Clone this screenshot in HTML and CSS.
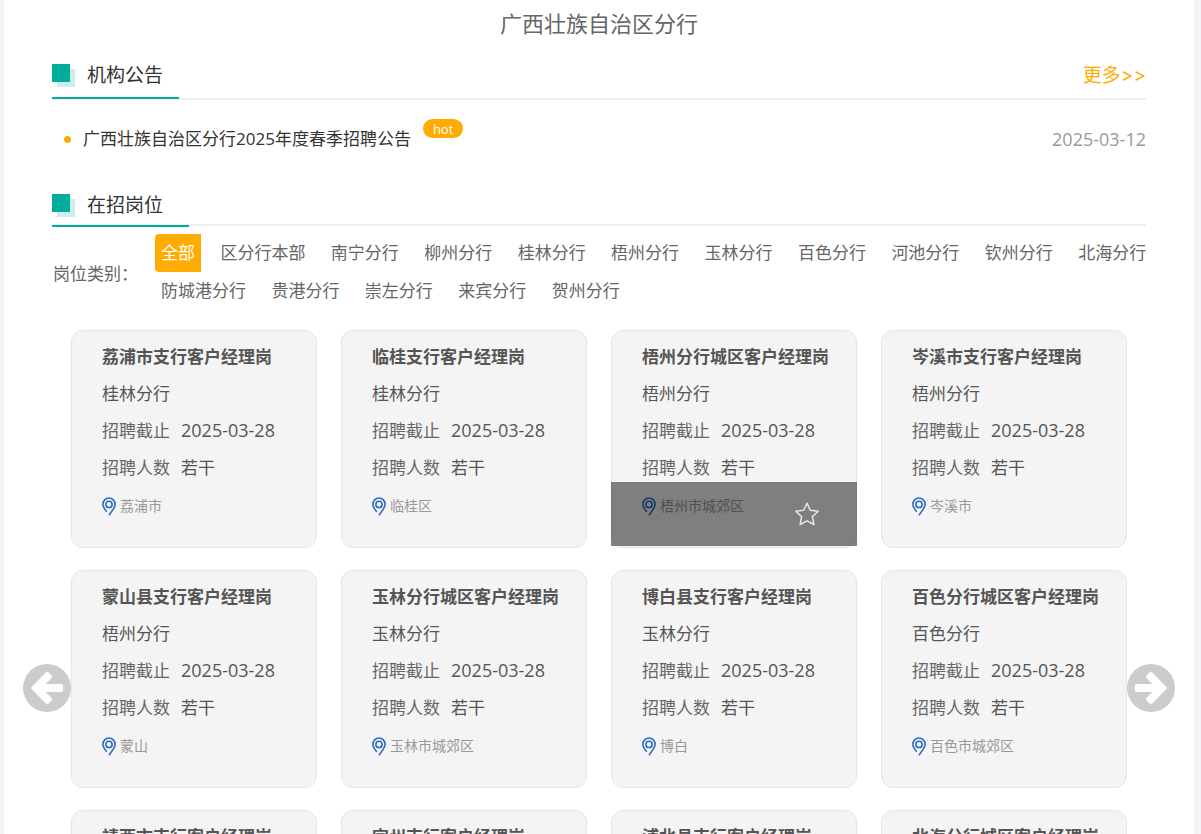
FILE: index.html
```html
<!DOCTYPE html>
<html lang="zh-CN">
<head>
    <meta charset="UTF-8">
    <meta name="viewport" content="width=device-width, initial-scale=1">
    <title>广西壮族自治区分行</title>
    <link rel="stylesheet" href="styles.css">
</head>
<body>
    <svg width="0" height="0" class="icon-defs" aria-hidden="true">
        <symbol id="icon-pin" viewBox="0 0 14 19">
            <path d="M4.4 14.4 2.4 11.6C1.4 10.1.9 8.9.9 7.3a6.1 6.3 0 0 1 12.2 0c0 1.9-.8 3.4-2 5.1L7.3 17.7" fill="none" stroke="currentColor" stroke-width="1.6" stroke-linecap="round"/>
            <circle cx="7" cy="7.4" r="3.1" fill="none" stroke="currentColor" stroke-width="1.6"/>
        </symbol>
        <symbol id="icon-arrow" viewBox="0 0 48 48">
            <circle cx="24" cy="24" r="24" fill="#ccc"/>
            <path d="M7.7 24 22 9.2q2-2.2 4.1-.2l1.8 1.8q1.9 2-.1 4.1L22.6 20H38.5q1.7 0 1.7 1.7v4.6q0 1.7-1.7 1.7H22.6l5.2 5.1q2 2.1.1 4.1l-1.8 1.8q-2.1 2-4.1-.2z" fill="#fff"/>
        </symbol>
    </svg>

    <main class="panel">
        <h1 class="page-title">广西壮族自治区分行</h1>

        <section class="block">
            <div class="block-header">
                <h2 class="block-title">机构公告</h2>
                <a href="#" class="more">更多&gt;&gt;</a>
            </div>
            <ul class="notice-list">
                <li>
                    <a href="#">广西壮族自治区分行2025年度春季招聘公告</a>
                    <span class="hot">hot</span>
                    <time>2025-03-12</time>
                </li>
            </ul>
        </section>

        <section>
            <div class="block">
                <div class="block-header jobs-header">
                    <h2 class="block-title">在招岗位</h2>
                </div>
            </div>
            <div class="filter">
                <span class="filter-label">岗位类别：</span>
                <div class="filter-items">
                    <a href="#" class="active">全部</a>
                    <a href="#">区分行本部</a>
                    <a href="#">南宁分行</a>
                    <a href="#">柳州分行</a>
                    <a href="#">桂林分行</a>
                    <a href="#">梧州分行</a>
                    <a href="#">玉林分行</a>
                    <a href="#">百色分行</a>
                    <a href="#">河池分行</a>
                    <a href="#">钦州分行</a>
                    <a href="#">北海分行</a>
                    <a href="#">防城港分行</a>
                    <a href="#">贵港分行</a>
                    <a href="#">崇左分行</a>
                    <a href="#">来宾分行</a>
                    <a href="#">贺州分行</a>
                </div>
            </div>

            <div class="carousel">
                <button type="button" class="arrow" aria-label="上一页"><svg><use href="#icon-arrow"/></svg></button>
                <div class="job-grid">
                    <article class="job">
                        <h3>荔浦市支行客户经理岗</h3>
                        <p>桂林分行</p>
                        <p><span>招聘截止</span><time>2025-03-28</time></p>
                        <p><span>招聘人数</span>若干</p>
                        <p class="place"><svg><use href="#icon-pin"/></svg>荔浦市</p>
                    </article>
                    <article class="job">
                        <h3>临桂支行客户经理岗</h3>
                        <p>桂林分行</p>
                        <p><span>招聘截止</span><time>2025-03-28</time></p>
                        <p><span>招聘人数</span>若干</p>
                        <p class="place"><svg><use href="#icon-pin"/></svg>临桂区</p>
                    </article>
                    <article class="job">
                        <h3>梧州分行城区客户经理岗</h3>
                        <p>梧州分行</p>
                        <p><span>招聘截止</span><time>2025-03-28</time></p>
                        <p><span>招聘人数</span>若干</p>
                        <p class="place"><svg><use href="#icon-pin"/></svg>梧州市城郊区</p>
                        <div class="job-mask">
                            <button type="button" class="star" aria-label="收藏">
                                <svg viewBox="0 0 24 24"><path d="M12 1.2 15.3 8.3 23.2 9.3 17.4 14.6 18.9 22.5 12 18.8 5.1 22.5 6.6 14.6.8 9.3 8.7 8.3z" fill="none" stroke="#e6e6e6" stroke-width="1.5" stroke-linejoin="round"/></svg>
                            </button>
                        </div>
                    </article>
                    <article class="job">
                        <h3>岑溪市支行客户经理岗</h3>
                        <p>梧州分行</p>
                        <p><span>招聘截止</span><time>2025-03-28</time></p>
                        <p><span>招聘人数</span>若干</p>
                        <p class="place"><svg><use href="#icon-pin"/></svg>岑溪市</p>
                    </article>
                    <article class="job">
                        <h3>蒙山县支行客户经理岗</h3>
                        <p>梧州分行</p>
                        <p><span>招聘截止</span><time>2025-03-28</time></p>
                        <p><span>招聘人数</span>若干</p>
                        <p class="place"><svg><use href="#icon-pin"/></svg>蒙山</p>
                    </article>
                    <article class="job">
                        <h3>玉林分行城区客户经理岗</h3>
                        <p>玉林分行</p>
                        <p><span>招聘截止</span><time>2025-03-28</time></p>
                        <p><span>招聘人数</span>若干</p>
                        <p class="place"><svg><use href="#icon-pin"/></svg>玉林市城郊区</p>
                    </article>
                    <article class="job">
                        <h3>博白县支行客户经理岗</h3>
                        <p>玉林分行</p>
                        <p><span>招聘截止</span><time>2025-03-28</time></p>
                        <p><span>招聘人数</span>若干</p>
                        <p class="place"><svg><use href="#icon-pin"/></svg>博白</p>
                    </article>
                    <article class="job">
                        <h3>百色分行城区客户经理岗</h3>
                        <p>百色分行</p>
                        <p><span>招聘截止</span><time>2025-03-28</time></p>
                        <p><span>招聘人数</span>若干</p>
                        <p class="place"><svg><use href="#icon-pin"/></svg>百色市城郊区</p>
                    </article>
                    <article class="job">
                        <h3>靖西市支行客户经理岗</h3>
                        <p>百色分行</p>
                        <p><span>招聘截止</span><time>2025-03-28</time></p>
                        <p><span>招聘人数</span>若干</p>
                        <p class="place"><svg><use href="#icon-pin"/></svg>靖西</p>
                    </article>
                    <article class="job">
                        <h3>宜州支行客户经理岗</h3>
                        <p>河池分行</p>
                        <p><span>招聘截止</span><time>2025-03-28</time></p>
                        <p><span>招聘人数</span>若干</p>
                        <p class="place"><svg><use href="#icon-pin"/></svg>宜州</p>
                    </article>
                    <article class="job">
                        <h3>浦北县支行客户经理岗</h3>
                        <p>钦州分行</p>
                        <p><span>招聘截止</span><time>2025-03-28</time></p>
                        <p><span>招聘人数</span>若干</p>
                        <p class="place"><svg><use href="#icon-pin"/></svg>浦北</p>
                    </article>
                    <article class="job">
                        <h3>北海分行城区客户经理岗</h3>
                        <p>北海分行</p>
                        <p><span>招聘截止</span><time>2025-03-28</time></p>
                        <p><span>招聘人数</span>若干</p>
                        <p class="place"><svg><use href="#icon-pin"/></svg>北海市城郊区</p>
                    </article>
                </div>
                <button type="button" class="arrow next" aria-label="下一页"><svg><use href="#icon-arrow"/></svg></button>
            </div>
        </section>
    </main>
</body>
</html>
```
FILE: styles.css
```css
:root {
    --green: #00ac9c;
    --orange: #ffab00;
    --line: #eee;
}
* { box-sizing: border-box; }
body {
    margin: 0;
    height: 100vh;
    overflow: hidden;
    background: #f4f4fa;
    color: #666;
    font-family: "Open Sans", "Noto Sans CJK SC", sans-serif;
    font-size: 17px;
}
h1, h2, h3, p, ul { margin: 0; padding: 0; font-weight: normal; }
a { color: inherit; text-decoration: none; }
button { padding: 0; border: none; background: none; cursor: pointer; }
svg { display: block; }
.icon-defs { position: absolute; }

.panel { margin: 0 7px 0 4px; background: #fff; }
.page-title { font-size: 22px; line-height: 47px; text-align: center; }
.block { padding: 0 48px; }

/* section headers */
.block-header {
    display: flex;
    justify-content: space-between;
    border-bottom: 2px solid var(--line);
}
.block-title {
    display: flex;
    align-items: center;
    margin-bottom: -1px;
    padding: 7px 16px 0 0;
    border-bottom: 2px solid var(--green);
    color: #333;
    font-size: 19px;
    line-height: 43px;
}
.block-title::before {
    content: "";
    width: 18px;
    height: 18px;
    margin: 0 17px 6px 0;
    background: var(--green);
    box-shadow: 5px 5px 0 #cceeea;
}
.jobs-header .block-title {
    margin-bottom: -3px;
    padding: 2px 26px 0 0;
    line-height: 39px;
}
.more {
    padding-top: 7px;
    color: var(--orange);
    font-family: Inter, "Noto Sans CJK SC", sans-serif;
    font-size: 19px;
    line-height: 43px;
}

/* notices */
.notice-list { padding: 19px 0 25px; list-style: none; }
.notice-list li { display: flex; align-items: center; line-height: 40px; }
.notice-list li::before {
    content: "";
    width: 7px;
    height: 7px;
    margin: 0 12px;
    border-radius: 50%;
    background: var(--orange);
}
.notice-list a { color: #333; }
.hot {
    align-self: flex-start;
    margin-left: 12px;
    padding: 1px 10px 0;
    border-radius: 10px;
    background: var(--orange);
    color: #fff;
    font-size: 13px;
    line-height: 18px;
}
.notice-list time { margin-left: auto; color: #999; }
time { font-size: 18px; }

/* branch filter */
.filter { display: flex; align-items: center; padding: 8px 20px 20px 49px; }
.filter-label { flex: 0 0 102px; }
.filter-items { line-height: 38px; }
.filter-items a { display: inline-block; margin-right: 9px; padding: 0 6px; vertical-align: top; }
.filter-items .active { border-radius: 4px 0 0 4px; background: var(--orange); color: #fff; }

/* job cards */
.carousel { display: flex; align-items: center; padding: 0 19px; }
.arrow { flex: none; width: 48px; height: 48px; }
.arrow svg { width: 48px; height: 48px; }
.arrow.next svg { transform: rotate(180deg); }
.job-grid {
    flex: 1;
    display: grid;
    grid-template-columns: repeat(4, 1fr);
    gap: 22px 24px;
    padding-bottom: 18px;
}
.job {
    position: relative;
    padding: 7px 0 23px 30px;
    border: 1px solid #e6e6e6;
    border-radius: 12px;
    background: #f4f4f4;
    color: #555;
    line-height: 37px;
    white-space: nowrap;
}
.job h3 { font-size: 17px; font-weight: bold; }
.job p { height: 37px; }
.job p span { margin-right: 11px; color: #666; }
.job .place { display: flex; align-items: center; gap: 4px; margin-top: 1px; color: #999; font-size: 14px; }
.place svg { width: 14px; height: 19px; margin-top: 2px; color: #2b6cbf; }
.job-mask {
    position: absolute;
    left: -1px;
    right: -1px;
    bottom: 1px;
    display: flex;
    align-items: center;
    justify-content: flex-end;
    height: 64px;
    padding-right: 38px;
    background: rgba(0, 0, 0, 0.48);
}
.star, .star svg { width: 24px; height: 24px; }
```
